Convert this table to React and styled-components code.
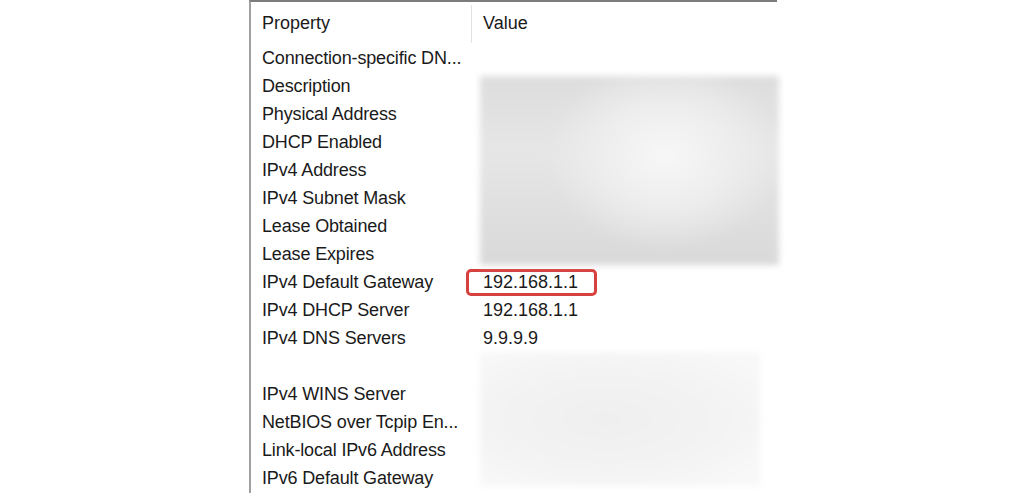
import React from "react";
import styled, { createGlobalStyle } from "styled-components";

const Global = createGlobalStyle`
  html, body { margin: 0; padding: 0; background: #ffffff; }
  body { font-family: "Liberation Sans", Arial, sans-serif; overflow: hidden; }
`;

const Page = styled.div`
  width: 1024px;
  height: 493px;
  overflow: hidden;
  display: flex;
  background: #fff;
`;

const Panel = styled.div`
  margin-left: 249px;
  width: 526px;
  height: 520px;
  border-left: 2px solid #a0a0a0;
  border-top: 2px solid #7c7c7c;
  background: #fff;
  display: flex;
  flex-direction: column;
`;

const Header = styled.div`
  display: grid;
  grid-template-columns: 221px 1fr;
  height: 42px;
`;

const HeaderCell = styled.div`
  display: flex;
  align-items: center;
  padding-left: ${(p) => p.$pad}px;
  font-size: 18px;
  color: #1a1a1a;
  border-right: ${(p) => (p.$divider ? "1px solid #e2e2e2" : "none")};
  margin-top: 3px;
  height: 38px;
  padding-bottom: 2px;
  box-sizing: border-box;
`;

const Grid = styled.div`
  display: grid;
  grid-template-columns: 221px 305px;
  grid-auto-rows: 28px;
`;

const Prop = styled.div`
  grid-column: 1;
  padding-left: 11px;
  display: flex;
  align-items: center;
  font-size: 18px;
  color: #1a1a1a;
  white-space: nowrap;
  letter-spacing: -0.15px;
`;

const Value = styled.div`
  grid-column: 2;
  padding-left: 11px;
  display: flex;
  align-items: center;
  font-size: 18px;
  color: #1a1a1a;
  white-space: nowrap;
`;

const Highlight = styled.span`
  display: inline-flex;
  align-items: center;
  box-sizing: border-box;
  width: 131px;
  height: 27px;
  margin-left: -17px;
  margin-top: 1px;
  padding-left: 14px;
  border: 3px solid #d6413f;
  border-radius: 5px;
`;

const Blur = styled.div`
  grid-column: 2;
  grid-row: ${(p) => p.$rows};
  margin: ${(p) => p.$margin};
  filter: blur(3px);
  background: ${(p) => p.$bg};
`;

const rows = [
  ["Connection-specific DN...", ""],
  ["Description", ""],
  ["Physical Address", ""],
  ["DHCP Enabled", ""],
  ["IPv4 Address", ""],
  ["IPv4 Subnet Mask", ""],
  ["Lease Obtained", ""],
  ["Lease Expires", ""],
  ["IPv4 Default Gateway", "192.168.1.1", true],
  ["IPv4 DHCP Server", "192.168.1.1"],
  ["IPv4 DNS Servers", "9.9.9.9"],
  ["", ""],
  ["IPv4 WINS Server", ""],
  ["NetBIOS over Tcpip En...", ""],
  ["Link-local IPv6 Address", ""],
  ["IPv6 Default Gateway", ""],
];

export default function App() {
  return (
    <>
      <Global />
      <Page>
        <Panel>
          <Header>
            <HeaderCell $pad={11} $divider>Property</HeaderCell>
            <HeaderCell $pad={11}>Value</HeaderCell>
          </Header>
          <Grid>
            {rows.map(([p, v, hl], i) => (
              <React.Fragment key={i}>
                <Prop style={{ gridRow: i + 1 }}>{p}</Prop>
                {v ? (
                  <Value style={{ gridRow: i + 1 }}>
                    {hl ? <Highlight>{v}</Highlight> : v}
                  </Value>
                ) : null}
              </React.Fragment>
            ))}
            <Blur
              $rows="2 / 9"
              $margin="4px -2px 3px 8px"
              $bg="radial-gradient(ellipse 40% 50% at 62% 42%, #f7f7f7 0%, #eeeeee 50%, rgba(236,236,236,0) 100%), linear-gradient(180deg, #dddddd 0%, #e6e6e6 40%, #d9d9d9 100%)"
            />
            <Blur
              $rows="12 / 17"
              $margin="0px 17px 6px 8px"
              $bg="radial-gradient(ellipse 70% 60% at 45% 50%, #efefef 0%, #f3f3f3 60%, #f8f8f8 100%)"
            />
          </Grid>
        </Panel>
      </Page>
    </>
  );
}
